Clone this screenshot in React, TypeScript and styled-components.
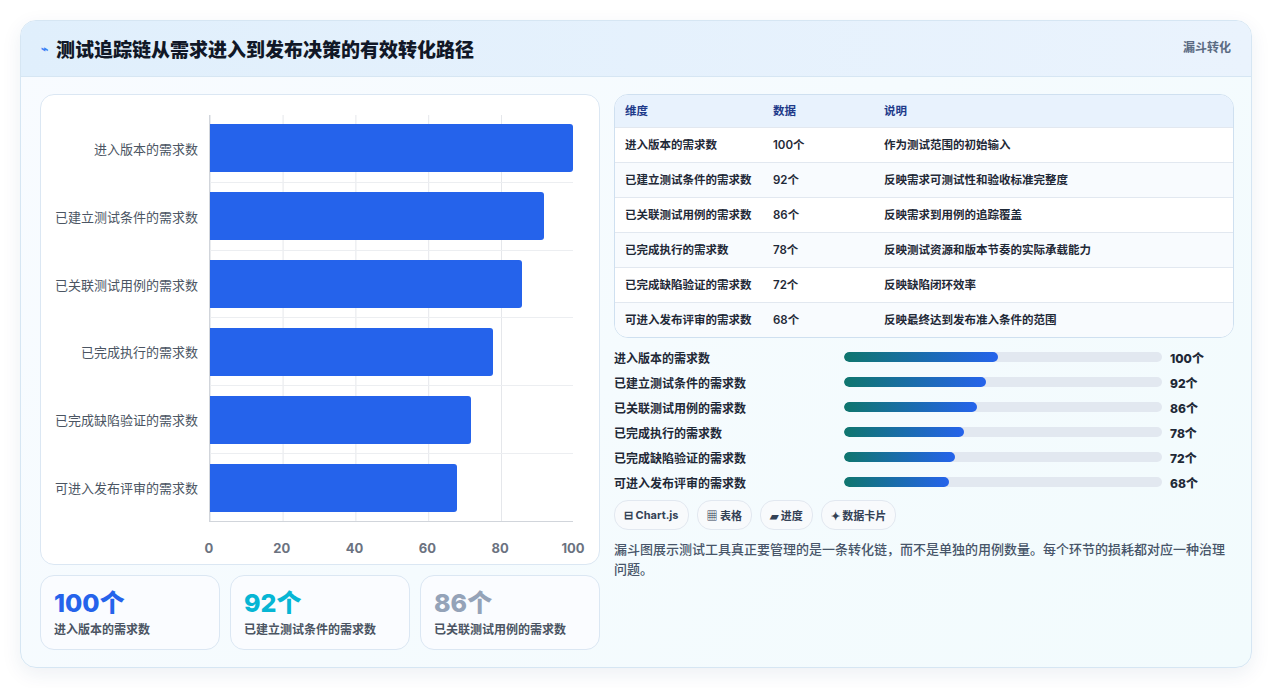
import React from "react";
import styled, { createGlobalStyle } from "styled-components";

const G = createGlobalStyle`
  body { margin:0; background:#fff; font-family: Inter, "Noto Sans CJK SC", sans-serif; }
`;
const data = [
  ["进入版本的需求数", 100, "作为测试范围的初始输入"],
  ["已建立测试条件的需求数", 92, "反映需求可测试性和验收标准完整度"],
  ["已关联测试用例的需求数", 86, "反映需求到用例的追踪覆盖"],
  ["已完成执行的需求数", 78, "反映测试资源和版本节奏的实际承载能力"],
  ["已完成缺陷验证的需求数", 72, "反映缺陷闭环效率"],
  ["可进入发布评审的需求数", 68, "反映最终达到发布准入条件的范围"],
] as const;

const Page = styled.div`padding:20px 21px 21px 20px;`;
const Card = styled.div`border:1px solid #d6e6f3;border-radius:16px;overflow:hidden;height:648px;box-sizing:border-box;
  background:linear-gradient(135deg,#f8fbff,#f2fbfd);box-shadow:0 6px 20px rgba(30,60,120,.08);`;
const Head = styled.div`height:55px;display:flex;align-items:center;justify-content:space-between;padding:0 20px;
  background:linear-gradient(90deg,#e0effc,#eaf3fd);border-bottom:1px solid #d6e6f3;`;
const Title = styled.h1`margin:0;font-size:19px;font-weight:900;color:#111827;display:flex;align-items:center;gap:8px;`;
const Tag = styled.span`font-size:12px;font-weight:700;color:#5b6b82;align-self:flex-start;margin-top:17px;`;
const Body = styled.div`display:grid;grid-template-columns:560px 620px;gap:14px;padding:17px 19px 0 19px;`;
const Col = styled.div`display:flex;flex-direction:column;gap:10px;`;
const ChartCard = styled.div`background:#fff;border:1px solid #dbe7f3;border-radius:14px;height:471px;box-sizing:border-box;padding:20px 26px 0 0;`;
const Rows = styled.div`display:flex;flex-direction:column;margin-left:168px;height:406px;border-left:1px solid #d1d5db;border-bottom:1px solid #d1d5db;
  background-image:linear-gradient(90deg,#e5e7eb 1px,transparent 1px);background-size:72.8px 100%;background-position:72.6px 0;`;
const Row = styled.div`flex:1;display:flex;align-items:center;position:relative;border-top:1px solid #eceef1;&:first-child{border-top:none;}`;
const RowLabel = styled.span`position:absolute;right:calc(100% + 12px);white-space:nowrap;font-size:13px;color:#4b5563;`;
const Bar = styled.div`height:48px;background:#2563eb;border-radius:0 3px 3px 0;`;
const Axis = styled.div`margin-left:168px;display:flex;justify-content:space-between;width:364px;padding-top:18px;
  font-size:13px;font-weight:700;color:#6b7280;`;
const Tick = styled.span`width:0;display:flex;justify-content:center;white-space:nowrap;`;
const Stats = styled.div`display:grid;grid-template-columns:repeat(3,1fr);gap:10px;`;
const Stat = styled.div`border:1px solid #dbe7f3;border-radius:14px;background:#fafcff;height:75px;box-sizing:border-box;padding:12px 13px;`;
const Big = styled.div<{c:string}>`font-size:25px;font-weight:800;color:${p=>p.c};line-height:30px;`;
const Small = styled.div`font-size:12px;color:#4b5563;font-weight:600;margin-top:2px;`;
const Table = styled.div`border:1px solid #cfe0f0;border-radius:14px;overflow:hidden;background:#fff;`;
const TR = styled.div<{h?:boolean;alt?:boolean}>`display:grid;grid-template-columns:148px 111px 1fr;padding:0 10px;
  background:${p=>p.h?"#e8f2fd":p.alt?"#f8fbfe":"#fff"};border-top:${p=>p.h?"none":"1px solid #e2e8f0"};
  font-size:11.5px;font-weight:${p=>p.h?700:600};color:${p=>p.h?"#1e3a8a":"#1f2937"};line-height:18px;
  padding-top:${p=>p.h?7:8}px;padding-bottom:${p=>p.h?7:8}px;
  & > span:first-child{padding-right:16px;}`;
const Progress = styled.div`display:flex;flex-direction:column;gap:7px;padding-top:10px;`;
const PRow = styled.div`display:grid;grid-template-columns:230px 318px 1fr;align-items:center;font-size:12px;font-weight:600;color:#1f2937;height:18px;`;
const Track = styled.div`height:10px;border-radius:5px;background:#e2e8f0;overflow:hidden;`;
const Fill = styled.div`height:100%;border-radius:5px;background:linear-gradient(90deg,#0f766e,#2563eb);`;
const Val = styled.span`padding-left:8px;font-weight:800;`;
const Chips = styled.div`display:flex;gap:8px;margin-top:9px;`;
const Chip = styled.span`border:1px solid #e2e8f0;border-radius:14px;background:#f8fafc;padding:0 9px;height:28px;display:flex;align-items:center;font-size:11px;font-weight:700;color:#334155;gap:3px;`;
const Note = styled.p`margin:9px 0 0;font-size:13px;color:#475569;line-height:20px;font-weight:500;`;

export default function App(){
  return <Page><G/><Card>
    <Head><Title><span style={{color:"#3b82f6",fontSize:12}}>⌁</span>测试追踪链从需求进入到发布决策的有效转化路径</Title><Tag>漏斗转化</Tag></Head>
    <Body>
      <Col>
        <ChartCard>
          <Rows>{data.map(d=><Row key={d[0]}><RowLabel>{d[0]}</RowLabel><Bar style={{width:`${d[1]}%`}}/></Row>)}</Rows>
          <Axis>{[0,20,40,60,80,100].map(n=><Tick key={n}>{n}</Tick>)}</Axis>
        </ChartCard>
        <Stats>
          <Stat><Big c="#2563eb">100个</Big><Small>进入版本的需求数</Small></Stat>
          <Stat><Big c="#06b6d4">92个</Big><Small>已建立测试条件的需求数</Small></Stat>
          <Stat><Big c="#94a3b8">86个</Big><Small>已关联测试用例的需求数</Small></Stat>
        </Stats>
      </Col>
      <Col style={{gap:0}}>
        <Table>
          <TR h><span>维度</span><span>数据</span><span>说明</span></TR>
          {data.map((d,i)=><TR key={d[0]} alt={i%2==1}><span>{d[0]}</span><span>{d[1]}个</span><span>{d[2]}</span></TR>)}
        </Table>
        <Progress>{data.map(d=><PRow key={d[0]}><span>{d[0]}</span><Track><Fill style={{width:`${d[1]*0.485}%`}}/></Track><Val>{d[1]}个</Val></PRow>)}</Progress>
        <Chips><Chip>⊟ Chart.js</Chip><Chip>▦ 表格</Chip><Chip>▰ 进度</Chip><Chip>✦ 数据卡片</Chip></Chips>
        <Note>漏斗图展示测试工具真正要管理的是一条转化链，而不是单独的用例数量。每个环节的损耗都对应一种治理问题。</Note>
      </Col>
    </Body>
  </Card></Page>;
}
